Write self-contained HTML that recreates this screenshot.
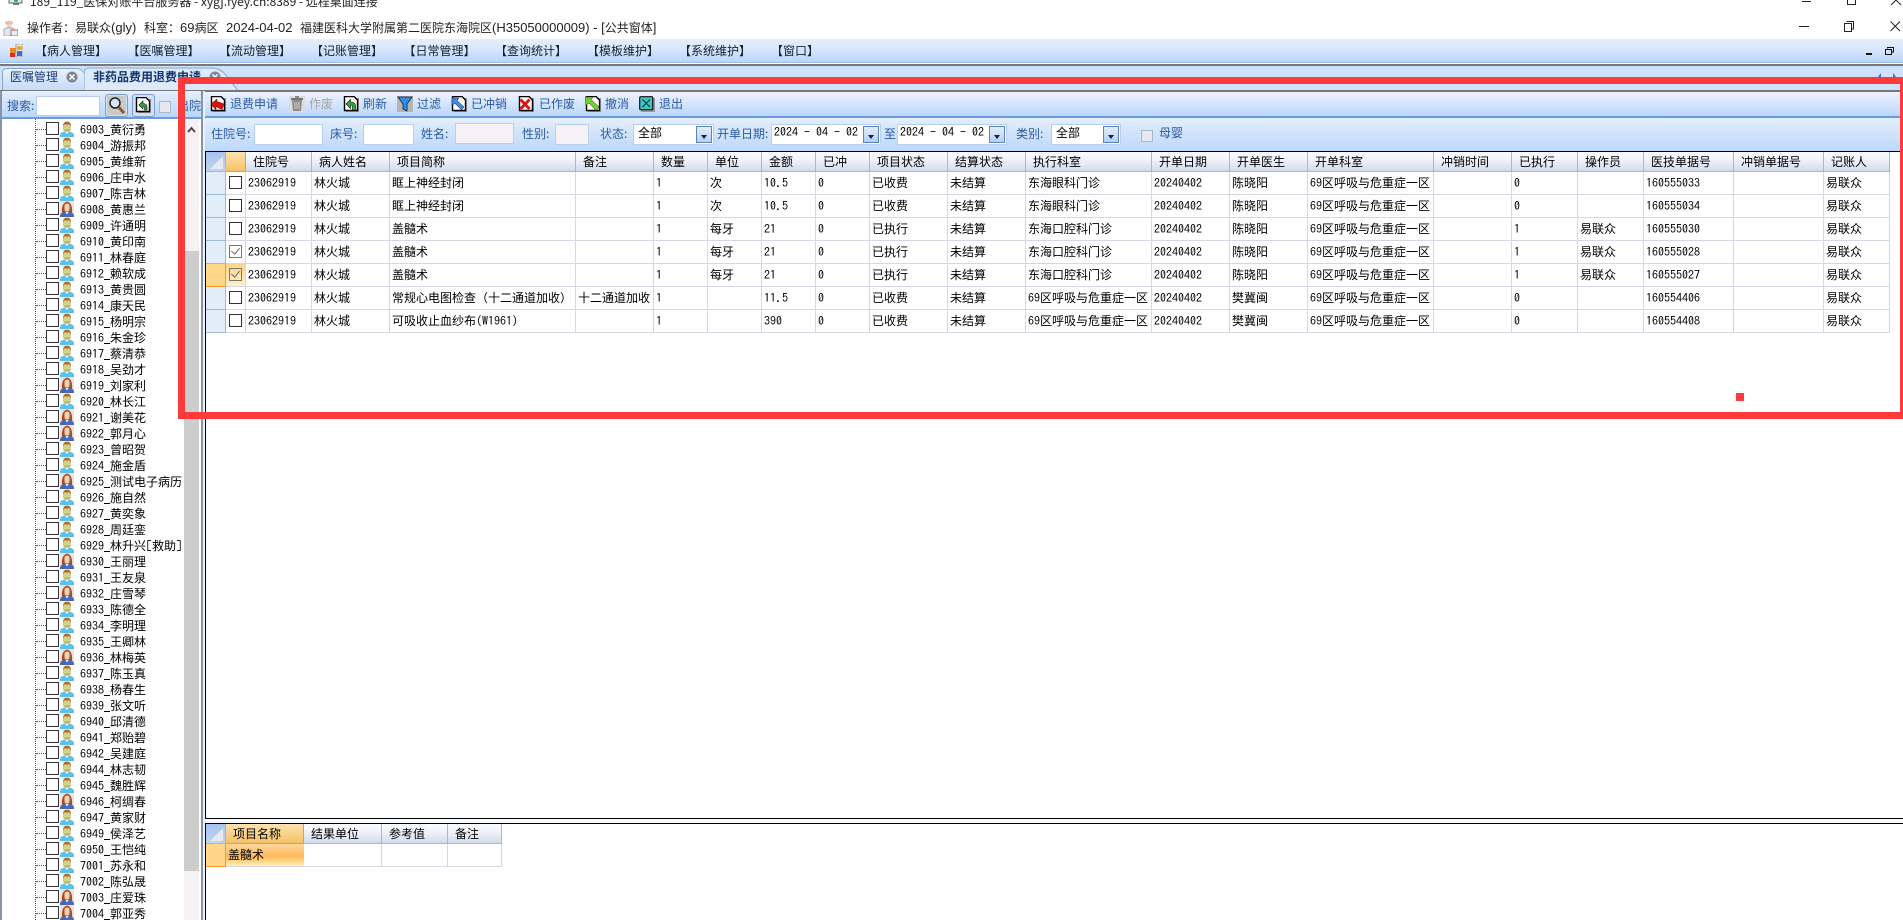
<!DOCTYPE html>
<html lang="zh-CN"><head><meta charset="utf-8"><title>非药品费用退费申请</title>
<style>
html,body{margin:0;padding:0;width:1903px;height:920px;overflow:hidden;background:#fff}
body{position:relative;font:12px/16px "WenQuanYi Zen Hei","Noto Sans CJK SC",sans-serif;color:#000}
.a{position:absolute;white-space:nowrap}
.box{position:absolute;box-sizing:border-box}
.n,b{font-family:"IPAGothic","Liberation Mono",monospace;font-weight:normal}
.l{font-family:"Liberation Sans",sans-serif;font-size:13px}
.blue{color:#2b5aa6}
.menu{position:absolute;top:43px;line-height:16px;white-space:nowrap;color:#123}
.input{position:absolute;box-sizing:border-box;background:#fff;border:1px solid #b9cfef;height:21px}
.btn{position:absolute;box-sizing:border-box;width:16px;top:1px;bottom:1px;right:1px;background:linear-gradient(#e4eefc,#b4d0f6);border:1px solid #5a84bd}
.btn:after{content:"";position:absolute;left:4px;top:8px;border:3px solid transparent;border-top:4px solid #123;border-bottom:0}
table{border-collapse:separate;border-spacing:0;table-layout:fixed;position:absolute}
th,td{box-sizing:border-box;padding:0;overflow:hidden;white-space:nowrap;font-weight:normal;text-align:left}
th{height:20px;padding-left:7px;background:linear-gradient(#fbfcfe,#f0f3fa 40%,#d3dceb);border-right:1px solid #9dbbd6;border-bottom:1px solid #9dbbd6;line-height:19px}
td{height:23px;padding-left:2px;background:#fff;border-right:1px solid #d3d7e8;border-bottom:1px solid #d3d7e8;line-height:22px}
th.c{padding:0;background:linear-gradient(#a6c4ee,#bdd3f3);position:relative}
th.c:after{content:"";position:absolute;right:2px;bottom:2px;border-style:solid;border-width:0 0 13px 13px;border-color:transparent transparent #e6eaf2 transparent}
th.o{background:linear-gradient(#fce3ae,#f6c267);border-right-color:#f19a2c;border-bottom-color:#f19a2c}
td.h{background:#e3edf7;border-right:1px solid #9dbbd6;border-bottom:1px solid #9dbbd6;padding:0}
td.hs{background:#ffd68a;border-right:1px solid #f19a2c;border-bottom:1px solid #f19a2c;padding:0}
td.k{padding:0;position:relative}
td.k i{position:absolute;left:3px;top:4px;width:13px;height:13px;box-sizing:border-box;border:1px solid #333;background:#fff}
td.k i.on{border-color:#777}
td.k i.on:after{content:"";position:absolute;left:3px;top:0;width:4px;height:7px;border:solid #666;border-width:0 1.5px 1.5px 0;transform:rotate(40deg)}
td.sel{background:linear-gradient(#ffd68a,#fff0c8)}
td.sel i{background:transparent}
.ti{position:absolute;left:0;width:184px;top:121px}
.r{height:16px;position:relative;white-space:nowrap}
.r:before{content:"";position:absolute;left:36px;top:8px;width:10px;border-top:1px dotted #555}
.r i{position:absolute;left:46px;top:1px;width:13px;height:13px;box-sizing:border-box;border:1px solid #333;background:#fff}
.r svg{position:absolute;left:60px;top:0;width:14px;height:16px}
.r span{position:absolute;left:80px;top:1px;line-height:16px}
.r span:before{content:"";position:absolute;left:24px;top:13px;width:6px;height:1px;background:#000}
.tool{position:absolute;top:96px;width:16px;height:16px}
.tt{position:absolute;top:96px;white-space:nowrap;color:#2b5aa6}
.red{position:absolute;background:#ff3a3a}
</style></head><body>
<svg width="0" height="0" style="position:absolute">
<defs>
<symbol id="m" viewBox="0 0 14 16"><path d="M0 16V13.5Q1 11 5 10.5H9Q13 11 14 13.5V16Z" fill="#5cc0ee"/><path d="M5 10.5L7 13L9 10.5Z" fill="#fff"/><path d="M3 5Q3 1 7 1T11 5V8Q11 11 7 11T3 8Z" fill="#d8cc86"/><path d="M3 5.500Q3 .5 7 .5T11 5.500L10 3.500H4Z" fill="#a06e3a"/><path d="M4.500 8Q7 9.500 9.500 8V9.500Q7 11 4.500 9.500Z" fill="#a3b86e"/></symbol>
<symbol id="f" viewBox="0 0 14 16"><rect width="14" height="16" fill="#e6e6ea"/><path d="M2 13Q1 2 7 .5Q13 2 12 13Z" fill="#b04a24"/><path d="M0 16V14Q1 11.5 5 11H9Q13 11.5 14 14V16Z" fill="#4a68b8"/><path d="M4.500 5Q4.500 2.500 7 2.500T9.500 5V8Q9.500 10.500 7 10.500T4.500 8Z" fill="#f2d2ae"/><path d="M5.500 11L7 13.500L8.500 11Z" fill="#fff"/></symbol>
<symbol id="d" viewBox="0 0 16 16"><rect x="3" y="2" width="13" height="14" fill="#999"/><path d="M1.5 .5H11L14.5 4V14.500H1.500Z" fill="#fff" stroke="#000" stroke-width="1.400"/></symbol>
</defs></svg>

<!-- window title rows -->
<svg class="a" style="left:8px;top:0" width="16" height="6"><rect x="1" y="-6" width="13" height="9" fill="#dfe6ee" stroke="#667"/><rect x="5" y="3" width="6" height="2" fill="#778"/><circle cx="8" cy="0" r="2" fill="#3a3"/></svg>
<div class="a" style="left:30px;top:-6px;color:#222">189_119_医保对账平台服务器 - xygj.fyey.cn:8389 - 远程桌面连接</div>
<div class="box" style="left:1802px;top:1px;width:9px;height:1px;background:#222"></div>
<div class="box" style="left:1847px;top:-4px;width:9px;height:9px;border:1px solid #222"></div>
<svg class="a" style="left:1891px;top:0" width="11" height="6"><path d="M0 -5L10 5M10 -5L0 5" stroke="#222"/></svg>

<svg class="a" style="left:2px;top:20px" width="16" height="16"><circle cx="7" cy="4" r="3" fill="#f0cfae"/><path d="M3 3Q7 -1 11 3Z" fill="#f4f4f4" stroke="#c66" stroke-width=".5"/><path d="M2 16V9Q7 6 12 9V16Z" fill="#dfe8f2" stroke="#9ab"/><rect x="9" y="10" width="7" height="6" fill="#e6eff6" stroke="#d55"/></svg>
<div class="a" style="left:27px;top:20px;color:#222">操作者：易联众<span class="l">(gly)</span></div>
<div class="a" style="left:144px;top:20px;color:#222">科室：<span class="l">69</span>病区</div>
<div class="a l" style="left:226px;top:20px;color:#222">2024-04-02</div>
<div class="a" style="left:300px;top:20px;color:#222">福建医科大学附属第二医院东海院区<span class="l">(H35050000009) - [</span>公共窗体<span class="l">]</span></div>
<div class="box" style="left:1799px;top:26px;width:10px;height:1px;background:#222"></div>
<svg class="a" style="left:1844px;top:21px" width="11" height="11" fill="none" stroke="#222"><path d="M2.500 .5H9.500V8H7.500M.5 2.500H7.500V10.500H.5Z"/></svg>
<svg class="a" style="left:1890px;top:21px" width="11" height="11"><path d="M.5 .5L10 10M10 .5L.5 10" stroke="#222"/></svg>

<!-- menu bar -->
<div class="box" style="left:0;top:39px;width:1903px;height:24px;background:linear-gradient(#e6eefd,#dde9fd 35%,#b9d6fb);border-bottom:1px solid #9cc0ee"></div>
<svg class="a" style="left:10px;top:44px" width="13" height="13"><rect x="6" y="0" width="7" height="13" fill="#f3f3f3" stroke="#999"/><rect x="0" y="4" width="6" height="5" fill="#ea8b1e"/><rect x="0" y="9" width="5" height="4" fill="#d92a2a"/><rect x="7" y="2" width="5" height="4" fill="#e8b020"/><rect x="7" y="7" width="5" height="5" fill="#3a6fd0"/></svg>
<div class="menu" style="left:35px">【病人管理】</div>
<div class="menu" style="left:127.500px">【医嘱管理】</div>
<div class="menu" style="left:219px">【流动管理】</div>
<div class="menu" style="left:311px">【记账管理】</div>
<div class="menu" style="left:403.500px">【日常管理】</div>
<div class="menu" style="left:495px">【查询统计】</div>
<div class="menu" style="left:587px">【模板维护】</div>
<div class="menu" style="left:679px">【系统维护】</div>
<div class="menu" style="left:771px">【窗口】</div>
<div class="box" style="left:1866px;top:53px;width:6px;height:2px;background:#111"></div>
<svg class="a" style="left:1885px;top:47px" width="9" height="8" fill="none" stroke="#111"><path d="M2.500 1.500V.5H8.500V5H6.500M.5 2.500H6.500V7.500H.5Z"/></svg>

<!-- tab strip -->
<div class="box" style="left:0;top:64px;width:1903px;height:2px;background:#777"></div>
<div class="box" style="left:0;top:66px;width:1903px;height:25px;background:#cfe1fb"></div>
<div class="box" style="left:2px;top:68px;width:83px;height:23px;background:linear-gradient(#e9f1fd,#c4dbf9);border:1px solid #88a6cc;border-bottom:0;border-radius:4px 8px 0 0"></div>
<div class="a" style="left:10px;top:69px;color:#1d3f78">医嘱管理</div>
<svg class="a" style="left:66px;top:71px" width="12" height="12"><circle cx="6" cy="6" r="5.500" fill="#7d8694"/><path d="M3.500 3.500L8.500 8.500M8.500 3.500L3.500 8.500" stroke="#fff" stroke-width="1.500"/></svg>
<svg class="a" style="left:84px;top:67px" width="156" height="24"><path d="M0 24V6Q0 1 5 1H128Q136 1 142 8L154 24Z" fill="#dceafc" stroke="#88a6cc"/></svg>
<div class="a" style="left:93px;top:69px;color:#12346e;font-weight:bold">非药品费用退费申请</div>
<svg class="a" style="left:209px;top:71px" width="12" height="12"><circle cx="6" cy="6" r="5.500" fill="#7d8694"/><path d="M3.500 3.500L8.500 8.500M8.500 3.500L3.500 8.500" stroke="#fff" stroke-width="1.500"/></svg>
<svg class="a" style="left:1876px;top:72px" width="22" height="6" fill="#3a78d0"><path d="M5 1V6L1 6ZM17 1V6L21 6Z"/></svg>
<div class="box" style="left:0;top:90px;width:1903px;height:1px;background:#777"></div>

<!-- left panel -->
<div class="box" style="left:0;top:91px;width:205px;height:829px;background:#eaf2fc"></div>
<div class="box" style="left:0;top:91px;width:2px;height:829px;background:#8a93a5"></div>
<div class="box" style="left:2px;top:92px;width:200px;height:27px;background:linear-gradient(#e2edfd,#b9d6fb);border-bottom:2px solid #6d9bdc"></div>
<div class="a blue" style="left:7px;top:98px">搜索:</div>
<div class="input" style="left:36px;top:96px;width:64px;height:20px"></div>
<div class="box" style="left:105px;top:94px;width:23px;height:23px;background:#cfe0f8;border:1px solid #7f9fca;border-radius:3px"></div>
<svg class="a" style="left:107px;top:96px" width="19" height="19"><rect width="19" height="19" fill="#c9c9c9"/><circle cx="8" cy="7" r="5" fill="#d9e6f5" stroke="#222" stroke-width="1.500"/><path d="M11.500 11L17 17" stroke="#8a5a2b" stroke-width="3"/></svg>
<div class="box" style="left:132px;top:94px;width:23px;height:23px;background:#cfe0f8;border:1px solid #7f9fca;border-radius:3px"></div>
<svg class="a" style="left:135px;top:97px" width="16" height="16"><use href="#d"/><path d="M4 8L8 4V6.500Q12 6.500 12 10V13H9.500V10.500Q9.500 9 8 9V12Z" fill="#3aa53a" stroke="#111" stroke-width=".6"/></svg>
<div class="box" style="left:159px;top:101px;width:12px;height:12px;background:#e6e8ee;border:1px solid #aab8cc"></div>
<div class="a blue" style="left:177px;top:98px">出院</div>
<div class="box" style="left:2px;top:119px;width:182px;height:801px;background:#fff"></div>
<div class="box" style="left:35px;top:119px;width:0;height:801px;border-left:1px dotted #555"></div>
<div class="ti">
<div class="r"><i></i><svg><use href="#m"/></svg><span><b>6903_</b>黄衍勇</span></div>
<div class="r"><i></i><svg><use href="#m"/></svg><span><b>6904_</b>游振邦</span></div>
<div class="r"><i></i><svg><use href="#m"/></svg><span><b>6905_</b>黄维新</span></div>
<div class="r"><i></i><svg><use href="#m"/></svg><span><b>6906_</b>庄申水</span></div>
<div class="r"><i></i><svg><use href="#m"/></svg><span><b>6907_</b>陈吉林</span></div>
<div class="r"><i></i><svg><use href="#f"/></svg><span><b>6908_</b>黄惠兰</span></div>
<div class="r"><i></i><svg><use href="#m"/></svg><span><b>6909_</b>许通明</span></div>
<div class="r"><i></i><svg><use href="#m"/></svg><span><b>6910_</b>黄印南</span></div>
<div class="r"><i></i><svg><use href="#m"/></svg><span><b>6911_</b>林春庭</span></div>
<div class="r"><i></i><svg><use href="#m"/></svg><span><b>6912_</b>赖软成</span></div>
<div class="r"><i></i><svg><use href="#m"/></svg><span><b>6913_</b>黄贵圆</span></div>
<div class="r"><i></i><svg><use href="#m"/></svg><span><b>6914_</b>康天民</span></div>
<div class="r"><i></i><svg><use href="#m"/></svg><span><b>6915_</b>杨明宗</span></div>
<div class="r"><i></i><svg><use href="#m"/></svg><span><b>6916_</b>朱金珍</span></div>
<div class="r"><i></i><svg><use href="#m"/></svg><span><b>6917_</b>蔡清恭</span></div>
<div class="r"><i></i><svg><use href="#m"/></svg><span><b>6918_</b>吴劲才</span></div>
<div class="r"><i></i><svg><use href="#f"/></svg><span><b>6919_</b>刘家利</span></div>
<div class="r"><i></i><svg><use href="#m"/></svg><span><b>6920_</b>林长江</span></div>
<div class="r"><i></i><svg><use href="#f"/></svg><span><b>6921_</b>谢美花</span></div>
<div class="r"><i></i><svg><use href="#f"/></svg><span><b>6922_</b>郭月心</span></div>
<div class="r"><i></i><svg><use href="#m"/></svg><span><b>6923_</b>曾昭贺</span></div>
<div class="r"><i></i><svg><use href="#m"/></svg><span><b>6924_</b>施金盾</span></div>
<div class="r"><i></i><svg><use href="#f"/></svg><span><b>6925_</b>测试电子病历</span></div>
<div class="r"><i></i><svg><use href="#m"/></svg><span><b>6926_</b>施自然</span></div>
<div class="r"><i></i><svg><use href="#m"/></svg><span><b>6927_</b>黄奕象</span></div>
<div class="r"><i></i><svg><use href="#m"/></svg><span><b>6928_</b>周廷銮</span></div>
<div class="r"><i></i><svg><use href="#m"/></svg><span><b>6929_</b>林升兴<b>[</b>救助<b>]</b></span></div>
<div class="r"><i></i><svg><use href="#f"/></svg><span><b>6930_</b>王丽理</span></div>
<div class="r"><i></i><svg><use href="#m"/></svg><span><b>6931_</b>王友泉</span></div>
<div class="r"><i></i><svg><use href="#f"/></svg><span><b>6932_</b>庄雪琴</span></div>
<div class="r"><i></i><svg><use href="#m"/></svg><span><b>6933_</b>陈德全</span></div>
<div class="r"><i></i><svg><use href="#m"/></svg><span><b>6934_</b>李明理</span></div>
<div class="r"><i></i><svg><use href="#m"/></svg><span><b>6935_</b>王卿林</span></div>
<div class="r"><i></i><svg><use href="#f"/></svg><span><b>6936_</b>林梅英</span></div>
<div class="r"><i></i><svg><use href="#m"/></svg><span><b>6937_</b>陈玉真</span></div>
<div class="r"><i></i><svg><use href="#m"/></svg><span><b>6938_</b>杨春生</span></div>
<div class="r"><i></i><svg><use href="#m"/></svg><span><b>6939_</b>张文听</span></div>
<div class="r"><i></i><svg><use href="#m"/></svg><span><b>6940_</b>邱清德</span></div>
<div class="r"><i></i><svg><use href="#m"/></svg><span><b>6941_</b>郑贻碧</span></div>
<div class="r"><i></i><svg><use href="#m"/></svg><span><b>6942_</b>吴建庭</span></div>
<div class="r"><i></i><svg><use href="#m"/></svg><span><b>6944_</b>林志韧</span></div>
<div class="r"><i></i><svg><use href="#m"/></svg><span><b>6945_</b>魏胜辉</span></div>
<div class="r"><i></i><svg><use href="#f"/></svg><span><b>6946_</b>柯绸春</span></div>
<div class="r"><i></i><svg><use href="#m"/></svg><span><b>6947_</b>黄家财</span></div>
<div class="r"><i></i><svg><use href="#m"/></svg><span><b>6949_</b>侯泽艺</span></div>
<div class="r"><i></i><svg><use href="#m"/></svg><span><b>6950_</b>王恺纯</span></div>
<div class="r"><i></i><svg><use href="#m"/></svg><span><b>7001_</b>苏永和</span></div>
<div class="r"><i></i><svg><use href="#m"/></svg><span><b>7002_</b>陈弘晟</span></div>
<div class="r"><i></i><svg><use href="#f"/></svg><span><b>7003_</b>庄爱珠</span></div>
<div class="r"><i></i><svg><use href="#f"/></svg><span><b>7004_</b>郭亚秀</span></div>
</div>
<!-- scrollbar -->
<div class="box" style="left:184px;top:119px;width:15px;height:801px;background:#f5f1f5"></div>
<div class="box" style="left:184px;top:251px;width:15px;height:620px;background:#cdcdcd"></div>
<svg class="a" style="left:187px;top:126px" width="9" height="7" fill="none" stroke="#444" stroke-width="1.800"><path d="M1 6L4.500 2L8 6"/></svg>
<div class="box" style="left:199px;top:119px;width:2px;height:801px;background:#fff"></div>
<div class="box" style="left:201px;top:91px;width:2px;height:829px;background:#8a93a5"></div>

<!-- toolbar -->
<div class="box" style="left:205px;top:91px;width:1698px;height:27px;background:linear-gradient(#eef3fd,#dfeafd 30%,#bad7fb);border-top:1px solid #777;border-bottom:2px solid #6d9bdc"></div>
<svg class="tool" style="left:210px"><use href="#d"/><path d="M1 8L7 3V5.500L14 8L12 13.500L6 10.500V14Z" fill="#e01010" stroke="#600" stroke-width=".5"/></svg>
<div class="tt" style="left:230px">退费申请</div>
<svg class="tool" style="left:289px"><rect width="16" height="16" fill="#dcdcdc"/><path d="M3 4H13L12 15H4Z" fill="#8d8d8d"/><rect x="2" y="2" width="12" height="2" fill="#777"/><rect x="6" y="0" width="4" height="2" fill="#888"/><path d="M6 6V13M8 6V13M10 6V13" stroke="#ccc"/></svg>
<div class="tt" style="left:309px;color:#a4a4a4">作废</div>
<svg class="tool" style="left:343px"><use href="#d"/><path d="M3 8L7.500 3.500V6Q12.500 6 12.500 10.500V14H9.500V11Q9.500 9 7.500 9V12.500Z" fill="#3aa53a" stroke="#111" stroke-width=".6"/></svg>
<div class="tt" style="left:363px">刷新</div>
<svg class="tool" style="left:397px"><rect width="16" height="16" fill="#b5b5b5"/><path d="M1 1H15L10 8V15L6 13V8Z" fill="#2f8fe6" stroke="#123" stroke-width=".8"/></svg>
<div class="tt" style="left:417px">过滤</div>
<svg class="tool" style="left:451px"><use href="#d"/><path d="M1 2H8L6 4.500L13 11L10.500 14L4 7.500L1 9Z" fill="#4a86e0" stroke="#124" stroke-width=".5"/></svg>
<div class="tt" style="left:471px">已冲销</div>
<svg class="tool" style="left:518px"><use href="#d"/><path d="M2.500 3.500L11.500 13M11.500 3.500L2.500 13" stroke="#e01010" stroke-width="2.800"/></svg>
<div class="tt" style="left:539px">已作废</div>
<svg class="tool" style="left:585px"><use href="#d"/><path d="M0 1H8L6 3.500L14 11L11 14.500L4 7L1 9Z" fill="#6fd030" stroke="#240" stroke-width=".5"/></svg>
<div class="tt" style="left:605px">撤消</div>
<svg class="tool" style="left:639px"><rect x="2" y="2" width="14" height="14" fill="#999"/><rect x=".7" y=".7" width="13" height="13" rx="1" fill="#3cc8c0" stroke="#111" stroke-width="1.200"/><path d="M3.500 3.500L11 11M11 3.500L3.500 11" stroke="#123"/></svg>
<div class="tt" style="left:659px">退出</div>

<!-- filter bar -->
<div class="box" style="left:205px;top:118px;width:1698px;height:33px;background:linear-gradient(#e4eefd,#bcd8fb)"></div>
<div class="a blue" style="left:211px;top:126px">住院号:</div>
<div class="input" style="left:254px;top:124px;width:69px"></div>
<div class="a blue" style="left:330px;top:126px">床号:</div>
<div class="input" style="left:363px;top:124px;width:51px"></div>
<div class="a blue" style="left:421px;top:126px">姓名:</div>
<div class="input" style="left:455px;top:123px;width:59px;background:#f5f1f5"></div>
<div class="a blue" style="left:522px;top:126px">性别:</div>
<div class="input" style="left:555px;top:124px;width:34px;background:#f5f1f5"></div>
<div class="a blue" style="left:600px;top:126px">状态:</div>
<div class="input" style="left:633px;top:124px;width:81px"><div class="btn"></div></div>
<div class="a" style="left:638px;top:125px">全部</div>
<div class="a blue" style="left:717px;top:126px">开单日期:</div>
<div class="input" style="left:771px;top:124px;width:110px"><div class="btn"></div></div>
<div class="a n" style="left:774px;top:124px">2024 - 04 - 02</div>
<div class="a blue" style="left:884px;top:126px">至</div>
<div class="input" style="left:897px;top:124px;width:110px"><div class="btn"></div></div>
<div class="a n" style="left:900px;top:124px">2024 - 04 - 02</div>
<div class="a blue" style="left:1016px;top:126px">类别:</div>
<div class="input" style="left:1051px;top:124px;width:70px"><div class="btn"></div></div>
<div class="a" style="left:1056px;top:125px">全部</div>
<div class="box" style="left:1141px;top:130px;width:12px;height:12px;background:#e6e8ee;border:1px solid #aab8cc"></div>
<div class="a blue" style="left:1159px;top:125px">母婴</div>

<!-- upper grid -->
<div class="box" style="left:205px;top:151px;width:1698px;height:668px;background:#fff;border-top:1px solid #000;border-left:1px solid #000;border-bottom:1px solid #000"></div>
<table style="left:206px;top:152px;width:1684px">
<colgroup><col style="width:20px"><col style="width:20px"><col style="width:66px"><col style="width:78px"><col style="width:186px"><col style="width:78px"><col style="width:54px"><col style="width:54px"><col style="width:54px"><col style="width:54px"><col style="width:78px"><col style="width:78px"><col style="width:126px"><col style="width:78px"><col style="width:78px"><col style="width:126px"><col style="width:78px"><col style="width:66px"><col style="width:66px"><col style="width:90px"><col style="width:90px"><col style="width:66px"></colgroup>
<tr><th class="c"></th><th class="o"></th><th>住院号</th><th>病人姓名</th><th>项目简称</th><th>备注</th><th>数量</th><th>单位</th><th>金额</th><th>已冲</th><th>项目状态</th><th>结算状态</th><th>执行科室</th><th>开单日期</th><th>开单医生</th><th>开单科室</th><th>冲销时间</th><th>已执行</th><th>操作员</th><th>医技单据号</th><th>冲销单据号</th><th>记账人</th></tr>
<tr><td class="h"></td><td class="k"><i></i></td><td class="n">23062919</td><td>林火城</td><td>眶上神经封闭</td><td></td><td class="n">1</td><td>次</td><td class="n">10.5</td><td class="n">0</td><td>已收费</td><td>未结算</td><td>东海眼科门诊</td><td class="n">20240402</td><td>陈晓阳</td><td><b>69</b>区呼吸与危重症一区</td><td></td><td class="n">0</td><td></td><td class="n">160555033</td><td></td><td>易联众</td></tr>
<tr><td class="h"></td><td class="k"><i></i></td><td class="n">23062919</td><td>林火城</td><td>眶上神经封闭</td><td></td><td class="n">1</td><td>次</td><td class="n">10.5</td><td class="n">0</td><td>已收费</td><td>未结算</td><td>东海眼科门诊</td><td class="n">20240402</td><td>陈晓阳</td><td><b>69</b>区呼吸与危重症一区</td><td></td><td class="n">0</td><td></td><td class="n">160555034</td><td></td><td>易联众</td></tr>
<tr><td class="h"></td><td class="k"><i></i></td><td class="n">23062919</td><td>林火城</td><td>盖髓术</td><td></td><td class="n">1</td><td>每牙</td><td class="n">21</td><td class="n">0</td><td>已执行</td><td>未结算</td><td>东海口腔科门诊</td><td class="n">20240402</td><td>陈晓阳</td><td><b>69</b>区呼吸与危重症一区</td><td></td><td class="n">1</td><td>易联众</td><td class="n">160555030</td><td></td><td>易联众</td></tr>
<tr><td class="h"></td><td class="k"><i class="on"></i></td><td class="n">23062919</td><td>林火城</td><td>盖髓术</td><td></td><td class="n">1</td><td>每牙</td><td class="n">21</td><td class="n">0</td><td>已执行</td><td>未结算</td><td>东海口腔科门诊</td><td class="n">20240402</td><td>陈晓阳</td><td><b>69</b>区呼吸与危重症一区</td><td></td><td class="n">1</td><td>易联众</td><td class="n">160555028</td><td></td><td>易联众</td></tr>
<tr><td class="hs"></td><td class="k sel"><i class="on"></i></td><td class="n">23062919</td><td>林火城</td><td>盖髓术</td><td></td><td class="n">1</td><td>每牙</td><td class="n">21</td><td class="n">0</td><td>已执行</td><td>未结算</td><td>东海口腔科门诊</td><td class="n">20240402</td><td>陈晓阳</td><td><b>69</b>区呼吸与危重症一区</td><td></td><td class="n">1</td><td>易联众</td><td class="n">160555027</td><td></td><td>易联众</td></tr>
<tr><td class="h"></td><td class="k"><i></i></td><td class="n">23062919</td><td>林火城</td><td>常规心电图检查（十二通道加收）</td><td>十二通道加收</td><td class="n">1</td><td></td><td class="n">11.5</td><td class="n">0</td><td>已收费</td><td>未结算</td><td><b>69</b>区呼吸与危重症一区</td><td class="n">20240402</td><td>樊冀闽</td><td><b>69</b>区呼吸与危重症一区</td><td></td><td class="n">0</td><td></td><td class="n">160554406</td><td></td><td>易联众</td></tr>
<tr><td class="h"></td><td class="k"><i></i></td><td class="n">23062919</td><td>林火城</td><td>可吸收止血纱布<b>(W1961)</b></td><td></td><td class="n">1</td><td></td><td class="n">390</td><td class="n">0</td><td>已收费</td><td>未结算</td><td><b>69</b>区呼吸与危重症一区</td><td class="n">20240402</td><td>樊冀闽</td><td><b>69</b>区呼吸与危重症一区</td><td></td><td class="n">0</td><td></td><td class="n">160554408</td><td></td><td>易联众</td></tr>
</table>

<!-- lower grid -->
<div class="box" style="left:205px;top:819px;width:1698px;height:4px;background:#f7f9fd"></div>
<div class="box" style="left:205px;top:823px;width:1698px;height:97px;background:#fff;border-top:1px solid #000;border-left:1px solid #000"></div>
<table style="left:206px;top:824px;width:296px">
<colgroup><col style="width:20px"><col style="width:78px"><col style="width:78px"><col style="width:66px"><col style="width:54px"></colgroup>
<tr><th class="c"></th><th class="o">项目名称</th><th>结果单位</th><th>参考值</th><th>备注</th></tr>
<tr><td class="hs"></td><td style="background:linear-gradient(#ffd7a0,#ffb85c 55%,#fff0b0);border-right:0">盖髓术</td><td></td><td></td><td></td></tr>
</table>

<!-- red annotation -->
<div class="red" style="left:178px;top:77px;width:1725px;height:7px"></div>
<div class="red" style="left:178px;top:77px;width:7px;height:342px"></div>
<div class="red" style="left:178px;top:412px;width:1725px;height:7px"></div>
<div class="red" style="left:1900px;top:77px;width:3px;height:342px"></div>
<div class="red" style="left:1736px;top:393px;width:8px;height:8px"></div>
</body></html>
